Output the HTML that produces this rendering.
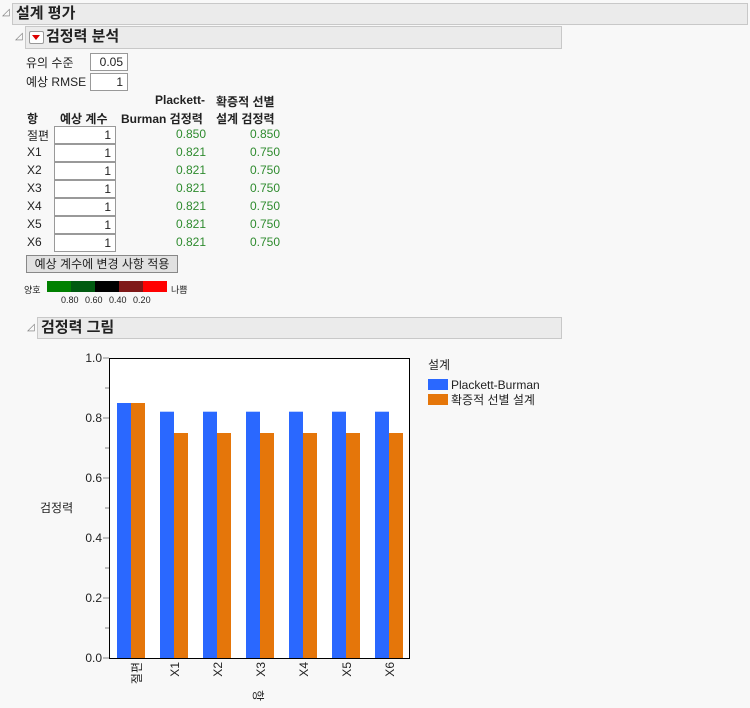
<!DOCTYPE html>
<html><head><meta charset="utf-8"><style>
body{margin:0;width:750px;height:708px;background:#f8f8f8;font-family:"Liberation Sans","Noto Sans CJK KR",sans-serif;font-size:12px;color:#222;position:relative;overflow:hidden}
.a{position:absolute;white-space:nowrap}
.bar{position:absolute;background:#ebebeb;border:1px solid #c8c8c8;font-weight:bold;font-size:15px;line-height:20px;padding-left:3px;box-sizing:border-box}
.in{position:absolute;background:#fff;border:1px solid #999;text-align:right;padding-right:4px;box-sizing:border-box;line-height:16px}
.g{color:#2e8b2e}
.tri{position:absolute;width:0;height:0}
</style></head><body>
<div class="a" style="left:2px;top:7px;color:#777;font-size:10px">◿</div>
<div class="bar" style="left:12px;top:3px;width:736px;height:22px">설계 평가</div>
<div class="a" style="left:15px;top:31px;color:#777;font-size:10px">◿</div>
<div class="bar" style="left:25px;top:26px;width:537px;height:23px;padding-left:20px">검정력 분석</div>
<div class="a" style="left:29px;top:31px;width:13px;height:11px;background:#fff;border:1px solid #999;border-radius:2px"></div>
<div class="a" style="left:32px;top:35px;width:0;height:0;border-left:4px solid transparent;border-right:4px solid transparent;border-top:5px solid #d00"></div>
<div class="a" style="left:26px;top:54px">유의 수준</div>
<div class="in" style="left:90px;top:53px;width:38px;height:18px">0.05</div>
<div class="a" style="left:26px;top:73px">예상 RMSE</div>
<div class="in" style="left:90px;top:73px;width:38px;height:18px">1</div>
<div class="a" style="left:155px;top:93px;font-weight:bold">Plackett-</div>
<div class="a" style="left:216px;top:93px;font-weight:bold">확증적 선별</div>
<div class="a" style="left:27px;top:110px;font-weight:bold">항</div>
<div class="a" style="left:60px;top:110px;font-weight:bold">예상 계수</div>
<div class="a" style="left:121px;top:110px;font-weight:bold">Burman 검정력</div>
<div class="a" style="left:216px;top:110px;font-weight:bold">설계 검정력</div>
<div id="rows"></div>
<div class="a" style="left:26px;top:255px;width:152px;height:18px;background:#e1e1e1;border:1px solid #888;box-sizing:border-box;text-align:center;line-height:16px">예상 계수에 변경 사항 적용</div>
<div class="a" style="left:24px;top:283px;font-size:9px">양호</div>
<div class="a" style="left:47px;top:281px;width:24px;height:11px;background:#008000"></div>
<div class="a" style="left:71px;top:281px;width:24px;height:11px;background:#005a10"></div>
<div class="a" style="left:95px;top:281px;width:24px;height:11px;background:#000"></div>
<div class="a" style="left:119px;top:281px;width:24px;height:11px;background:#7f1818"></div>
<div class="a" style="left:143px;top:281px;width:24px;height:11px;background:#ff0000"></div>
<div class="a" style="left:171px;top:283px;font-size:9px">나쁨</div>
<div class="a" style="left:61px;top:295px;font-size:9px;word-spacing:4px">0.80 0.60 0.40 0.20</div>
<div class="a" style="left:27px;top:322px;color:#777;font-size:10px">◿</div>
<div class="bar" style="left:37px;top:317px;width:525px;height:22px">검정력 그림</div>
<svg class="a" style="left:0;top:340px" width="750" height="368">
<g font-family="Liberation Sans" font-size="12" fill="#222" text-anchor="end">
<text x="102" y="22">1.0</text><text x="102" y="82">0.8</text><text x="102" y="142">0.6</text><text x="102" y="202">0.4</text><text x="102" y="262">0.2</text><text x="102" y="322">0.0</text>
</g>
<g stroke="#888"><path d="M103 18h6M105 48h4M103 78h6M105 108h4M103 138h6M105 168h4M103 198h6M105 228h4M103 258h6M105 288h4M103 318h6"/></g>
<rect x="109.5" y="18.5" width="300" height="300" fill="#fff" stroke="#000"/>
<g id="bars"></g>
<g font-family="Liberation Sans,Noto Sans CJK KR" font-size="12" fill="#222">
<text transform="translate(141,322) rotate(-90)" text-anchor="end">절편</text>
<text transform="translate(179,322) rotate(-90)" text-anchor="end">X1</text>
<text transform="translate(222,322) rotate(-90)" text-anchor="end">X2</text>
<text transform="translate(265,322) rotate(-90)" text-anchor="end">X3</text>
<text transform="translate(308,322) rotate(-90)" text-anchor="end">X4</text>
<text transform="translate(351,322) rotate(-90)" text-anchor="end">X5</text>
<text transform="translate(394,322) rotate(-90)" text-anchor="end">X6</text>
<text transform="translate(254,350) rotate(90)">항</text>
<text x="40" y="172">검정력</text>
<text x="428" y="29">설계</text>
<rect x="428" y="39" width="20" height="11" fill="#2a68ff"/>
<rect x="428" y="54" width="20" height="11" fill="#e5760a"/>
<text x="451" y="49">Plackett-Burman</text>
<text x="451" y="64">확증적 선별 설계</text>
</g>
</svg>
<script>
var r='',n=['절편','X1','X2','X3','X4','X5','X6'];
for(var i=0;i<7;i++){var y=127+i*18;
r+='<div class="a" style="left:27px;top:'+y+'px">'+n[i]+'</div><div class="in" style="left:54px;top:'+(y-1)+'px;width:62px;height:18px">1</div><div class="a g" style="left:176px;top:'+y+'px">'+(i?'0.821':'0.850')+'</div><div class="a g" style="left:250px;top:'+y+'px">'+(i?'0.750':'0.850')+'</div>';}
document.getElementById('rows').innerHTML=r;
var b='';for(var i=0;i<7;i++){var x=117+i*43,h1=i?246.3:255,h2=i?225:255;
b+='<rect x="'+x+'" y="'+(318-h1)+'" width="14" height="'+h1+'" fill="#2a68ff"/><rect x="'+(x+14)+'" y="'+(318-h2)+'" width="14" height="'+h2+'" fill="#e5760a"/>';}
document.getElementById('bars').innerHTML=b;
</script>
</body></html>
